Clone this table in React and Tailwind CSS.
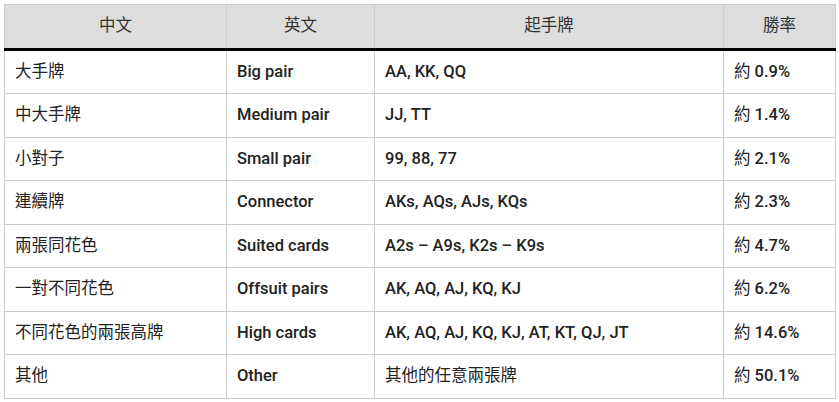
import React from "react";

const rows = [
  ["大手牌", "Big pair", "AA, KK, QQ", "0.9%"],
  ["中大手牌", "Medium pair", "JJ, TT", "1.4%"],
  ["小對子", "Small pair", "99, 88, 77", "2.1%"],
  ["連續牌", "Connector", "AKs, AQs, AJs, KQs", "2.3%"],
  ["兩張同花色", "Suited cards", "A2s – A9s, K2s – K9s", "4.7%"],
  ["一對不同花色", "Offsuit pairs", "AK, AQ, AJ, KQ, KJ", "6.2%"],
  ["不同花色的兩張高牌", "High cards", "AK, AQ, AJ, KQ, KJ, AT, KT, QJ, JT", "14.6%"],
  ["其他", "Other", "其他的任意兩張牌", "50.1%", true],
];

export default function App() {
  return (
    <div className="p-1 bg-white">
      <table
        className="w-[831px] table-fixed border-collapse text-[16.5px] leading-[22.5px] text-[#222]"
        style={{ fontFamily: 'Roboto, "Noto Sans CJK TC", sans-serif' }}
      >
        <colgroup>
          <col className="w-[222px]" />
          <col className="w-[148px]" />
          <col className="w-[349px]" />
          <col className="w-[112px]" />
        </colgroup>
        <thead>
          <tr className="bg-[#dddddd]">
            {["中文", "英文", "起手牌", "勝率"].map((h) => (
              <th
                key={h}
                className="border border-[#cccccc] border-b-[3px] border-b-black px-[10px] py-[10px] text-center font-normal text-[#333]"
              >
                {h}
              </th>
            ))}
          </tr>
        </thead>
        <tbody>
          {rows.map(([zh, en, hand, rate, cjkHand]) => (
            <tr key={zh}>
              <td className="border border-[#cccccc] px-[10px] py-[10px] font-normal">{zh}</td>
              <td className="border border-[#cccccc] px-[10px] py-[10px] font-medium">{en}</td>
              <td className={"border border-[#cccccc] px-[10px] py-[10px] " + (cjkHand ? "font-normal" : "font-medium")}>
                {hand}
              </td>
              <td className="border border-[#cccccc] px-[10px] py-[10px] font-medium">
                <span className="font-normal">約</span> {rate}
              </td>
            </tr>
          ))}
        </tbody>
      </table>
    </div>
  );
}
